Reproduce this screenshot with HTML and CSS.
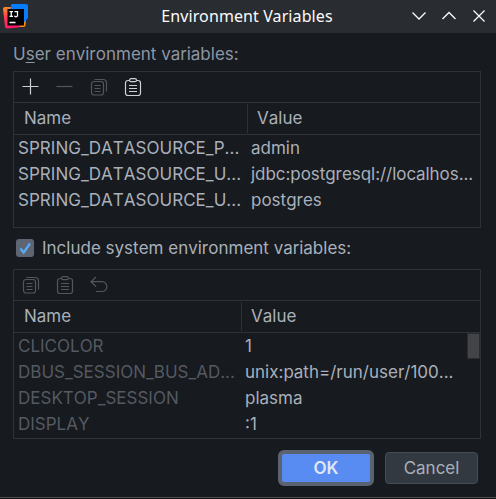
FILE: index.html
```html
<!DOCTYPE html>
<html lang="en">
<head>
<meta charset="utf-8">
<title>Environment Variables</title>
<link rel="stylesheet" href="styles.css">
</head>
<body>
<svg class="defs" aria-hidden="true">
  <symbol id="copy" viewBox="0 0 20 20"><path d="M5.500 2.500H14a3.500 3.500 0 0 1 3.500 3.500v8.500"/><rect x="2.500" y="4.500" width="12" height="13.500" rx="2.500"/><path d="M5.500 8.500h6M5.500 11.500h6M5.500 14.500h6"/></symbol>
  <symbol id="paste" viewBox="0 0 20 20"><path d="M6.500 3.500H5A2.500 2.500 0 0 0 2.500 6v10A2.500 2.500 0 0 0 5 18.500h10a2.500 2.500 0 0 0 2.500-2.500V6A2.500 2.500 0 0 0 15 3.500h-1.500"/><rect x="6.500" y="1.700" width="7" height="3" rx="1.500"/><path d="M6 8.500h8M6 11.500h8M6 14.500h8"/></symbol>
</svg>
<div class="dialog">
  <header class="titlebar">
    <svg class="logo" viewBox="0 0 26 26">
      <defs>
        <linearGradient id="warm" x1="0" y1="0" x2=".3" y2="1"><stop offset="0" stop-color="#ff9419"/><stop offset=".5" stop-color="#ff3a58"/><stop offset="1" stop-color="#ff1868"/></linearGradient>
      </defs>
      <path fill="#ff8a0c" d="M15 10h8.500l-1 12.500a2 2 0 0 1-2 2H13z"/>
      <path fill="url(#warm)" d="M2 4.500h14L19 21l-3.500 4L4 26a2 2 0 0 1-2-2L0 6.500a2 2 0 0 1 2-2z"/>
      <path fill="#087cfa" d="M8.500 1.500H23a2 2 0 0 1 2 2v12l-4 4.500L7 8z"/>
      <path d="M4.500 6.500h16.500v16.500H4.500z"/>
      <g stroke="#fff" stroke-width="1.300" fill="none"><path d="M6.500 9.200h3.500M6.500 13.800h3.500M8.250 9.200v4.600M11.500 9.200h3v3a1.600 1.600 0 0 1-3 1.100M6.500 20h6"/></g>
    </svg>
    <h1>Environment Variables</h1>
    <div class="controls">
      <svg viewBox="0 0 16 16"><path d="M1.500 4.500 8 11l6.500-6.500"/></svg>
      <svg viewBox="0 0 16 16"><path d="M1.500 11 8 4.500l6.500 6.500"/></svg>
      <svg viewBox="0 0 16 16"><path d="m2.500 2.500 11 11m0-11-11 11"/></svg>
    </div>
  </header>
  <main>
    <p class="label">U<u>s</u>er environment variables:</p>
    <section class="panel user">
      <div class="toolbar">
        <svg class="icon" viewBox="0 0 20 20"><path d="M9.500 1.500v16M1.500 9.500h16"/></svg>
        <svg class="icon off" viewBox="0 0 20 20"><path d="M1.500 9.500h16"/></svg>
        <svg class="icon off"><use href="#copy"/></svg>
        <svg class="icon"><use href="#paste"/></svg>
      </div>
      <div class="row head"><span>Name</span><span>Value</span></div>
      <div class="row"><span class="caps">SPRING_DATASOURCE_P...</span><span>admin</span></div>
      <div class="row"><span class="caps">SPRING_DATASOURCE_U...</span><span class="url">jdbc:postgresql://localhos...</span></div>
      <div class="row"><span class="caps">SPRING_DATASOURCE_U...</span><span>postgres</span></div>
    </section>
    <div class="include">
      <span class="box"><svg viewBox="0 0 18 18"><path d="m4.500 9.500 3.200 4 6.300-9"/></svg></span>
      <span>Include system environment variables:</span>
    </div>
    <section class="panel system">
      <div class="toolbar">
        <svg class="icon off"><use href="#copy"/></svg>
        <svg class="icon off"><use href="#paste"/></svg>
        <svg class="icon off" viewBox="0 0 20 20"><path d="M7 2 2 6.700 7 11.500M2.500 6.700h10.500a4.700 4.700 0 0 1 0 9.800H7"/></svg>
      </div>
      <div class="row head"><span>Name</span><span>Value</span></div>
      <div class="rows">
        <div class="row"><span class="caps">CLICOLOR</span><span>1</span></div>
        <div class="row"><span class="caps">DBUS_SESSION_BUS_AD...</span><span>unix:path=/run/user/100...</span></div>
        <div class="row"><span class="caps">DESKTOP_SESSION</span><span>plasma</span></div>
        <div class="row"><span class="caps">DISPLAY</span><span>:1</span></div>
        <i class="thumb"></i>
      </div>
    </section>
    <footer><button class="ok">OK</button><button class="cancel">Cancel</button></footer>
  </main>
</div>
</body>
</html>
```
FILE: styles.css
```css
* { box-sizing: border-box; }
body { margin: 0; background: #0d0e10; font: 17px/26px Inter, "Liberation Sans", sans-serif; font-kerning: none; color: #a9b0bb; }
.defs { position: absolute; width: 0; height: 0; }
.dialog { width: 496px; height: 498px; background: #171a1e; border-bottom: 1px solid #505154; overflow: hidden; }
.titlebar { height: 33px; background: #292c30; display: grid; grid-template-columns: 100px 1fr 100px; align-items: center; }
.logo { width: 26px; height: 27px; margin-left: 3px; margin-top: -3px; }
h1 { margin: 0; font: 16px/32px "Noto Sans", sans-serif; letter-spacing: .1px; color: #fcfcfc; text-align: center; white-space: nowrap; margin-left: -2px; margin-top: -1px; }
.controls { display: flex; gap: 14px; justify-content: flex-end; padding-right: 9.5px; margin-top: -2px; }
.controls svg { width: 16px; height: 16px; fill: none; stroke: #fcfcfc; stroke-width: 1.3; }
main { padding: 0 15px 0 13px; }
.label { margin: 0; height: 38px; padding-top: 8px; color: #8d96a4; }
.label u { text-decoration-thickness: 1px; text-underline-offset: 2px; text-decoration-skip-ink: none; }
.panel { border: 1px solid #2e3138; }
.user { height: 157px; }
.system { height: 170px; }
.toolbar { height: 30px; display: flex; align-items: center; gap: 14px; padding: 0 0 1px 7px; }
.icon { width: 20px; height: 20px; fill: none; stroke: #ced0d6; stroke-width: 1.2; }
.off { stroke: #54565a; }
.row { display: grid; grid-template-columns: 233px 1fr; height: 26px; white-space: nowrap; }
.system .row { grid-template-columns: 227px 1fr; }
.row span { padding-left: 4px; }
.user .caps { letter-spacing: .03px; }
.head { height: 33px; border: solid #2e3138; border-width: 1px 0; line-height: 31px; }
.head span { padding-left: 10px; }
.head span + span { border-left: 1px solid #2e3138; margin: 1px 0; padding-left: 9px; line-height: 29px; }
.system .caps { color: #545962; }
.url { letter-spacing: -.05px; }
.include { display: flex; align-items: center; height: 41px; padding: 0 0 1px 3px; gap: 8px; }
.box { width: 18px; height: 18px; border-radius: 3px; background: #5d6573; display: block; }
.box svg { display: block; fill: none; stroke: #59a9f5; stroke-width: 2.3; }
.rows { position: relative; }
.thumb { position: absolute; right: 0; top: 0; width: 13px; height: 26px; background: #434447; border: 1px solid #2b2c2f; }
footer { display: flex; justify-content: flex-end; align-items: center; gap: 11px; padding: 11px 3px 0 0; }
button { font: inherit; color: #a9b0bb; padding: 0; }
.ok { width: 96px; height: 36px; background: #588cf3; border: 4px solid #5b6370; border-radius: 6px; color: #e0e6f2; font-weight: 600; }
.cancel { width: 93px; height: 32px; background: #333941; border: 1px solid #454b59; border-radius: 4px; }
```
